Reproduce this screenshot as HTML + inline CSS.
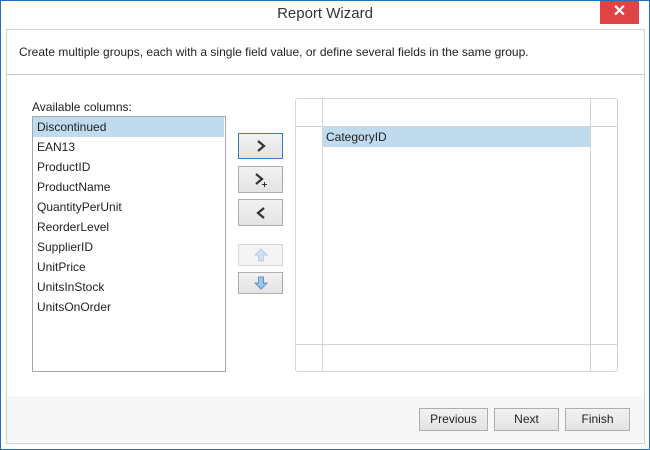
<!DOCTYPE html><html><head><style>
body{margin:0;width:650px;height:450px;background:#fff;font-family:"Liberation Sans",sans-serif;font-size:12px;color:#222;position:relative;overflow:hidden}
.a{position:absolute}
.btn{position:absolute;background:linear-gradient(#f2f2f2,#e3e3e3);border:1px solid #adadad;box-sizing:border-box;text-align:center}
.it{position:absolute;left:37px;font-size:12px}
svg{display:block;margin:0 auto}
</style></head><body>
<div class="a" style="left:0;top:0;width:648px;height:448px;border:1px solid #1d6fc0;background:#fff"></div>
<div class="a" style="left:0;top:5px;width:650px;text-align:center;font-size:15px;color:#333">Report Wizard</div>
<div class="a" style="left:600px;top:1px;width:39px;height:23px;background:#e04343;color:#fff;text-align:center;font-size:16px;line-height:22px;font-weight:bold">✕</div>
<div class="a" style="left:6px;top:29px;width:637px;height:413px;border:1px solid #d0d0d0;background:#fff"></div>
<div class="a" style="left:7px;top:74px;width:637px;height:1px;background:#c8c8c8"></div>
<div class="a" style="left:19px;top:45px;font-size:12px">Create multiple groups, each with a single field value, or define several fields in the same group.</div>
<div class="a" style="left:7px;top:396px;width:637px;height:46px;background:#f7f7f7"></div>
<div class="a" style="left:32px;top:100px">Available columns:</div>
<div class="a" style="left:32px;top:116px;width:192px;height:254px;border:1px solid #a8a8a8"></div>
<div class="a" style="left:33px;top:117px;width:191px;height:20px;background:#c0dbee"></div>
<div class="it" style="top:120px">Discontinued</div>
<div class="it" style="top:140px">EAN13</div>
<div class="it" style="top:160px">ProductID</div>
<div class="it" style="top:180px">ProductName</div>
<div class="it" style="top:200px">QuantityPerUnit</div>
<div class="it" style="top:220px">ReorderLevel</div>
<div class="it" style="top:240px">SupplierID</div>
<div class="it" style="top:260px">UnitPrice</div>
<div class="it" style="top:280px">UnitsInStock</div>
<div class="it" style="top:300px">UnitsOnOrder</div>
<div class="btn" style="left:238px;top:133px;width:45px;height:26px;border-color:#2f7fd0"><svg width="14" height="14" style="margin-top:5px" viewBox="0 0 14 14"><path d="M4 2L10 7L4 12" fill="none" stroke="#333" stroke-width="2.2"/></svg></div>
<div class="btn" style="left:238px;top:166px;width:45px;height:27px"><svg width="16" height="16" style="margin-top:5px" viewBox="0 0 16 16"><path d="M3 2L9 7L3 12" fill="none" stroke="#333" stroke-width="2.2"/><path d="M9 12.5H14M11.5 10V15" stroke="#333" stroke-width="1"/></svg></div>
<div class="btn" style="left:238px;top:199px;width:45px;height:27px"><svg width="14" height="14" style="margin-top:6px" viewBox="0 0 14 14"><path d="M10 2L4 7L10 12" fill="none" stroke="#333" stroke-width="2.2"/></svg></div>
<div class="btn" style="left:238px;top:244px;width:45px;height:22px;background:#f4f4f4;border-color:#d8d8d8"><svg width="14" height="14" style="margin-top:3px" viewBox="0 0 14 14"><path d="M7 1L13 7H9.5V13H4.5V7H1Z" fill="#cfe0f0" stroke="#b8cde0"/></svg></div>
<div class="btn" style="left:238px;top:272px;width:45px;height:22px"><svg width="14" height="14" style="margin-top:3px" viewBox="0 0 14 14"><path d="M4.5 1H9.5V7H13L7 13L1 7H4.5Z" fill="#9cc3e8" stroke="#5f93c8"/></svg></div>
<div class="a" style="left:295px;top:98px;width:321px;height:272px;border:1px solid #d4d4d4;border-radius:3px"></div>
<div class="a" style="left:322px;top:99px;width:1px;height:272px;background:#d4d4d4"></div>
<div class="a" style="left:590px;top:99px;width:1px;height:272px;background:#d4d4d4"></div>
<div class="a" style="left:296px;top:126px;width:321px;height:1px;background:#d4d4d4"></div>
<div class="a" style="left:296px;top:344px;width:321px;height:1px;background:#d4d4d4"></div>
<div class="a" style="left:323px;top:127px;width:267px;height:20px;background:#c0dbee"></div>
<div class="a" style="left:326px;top:130px">CategoryID</div>
<div class="btn" style="left:419px;top:408px;width:69px;height:23px;line-height:21px">Previous</div>
<div class="btn" style="left:494px;top:408px;width:65px;height:23px;line-height:21px">Next</div>
<div class="btn" style="left:565px;top:408px;width:65px;height:23px;line-height:21px">Finish</div>
</body></html>
